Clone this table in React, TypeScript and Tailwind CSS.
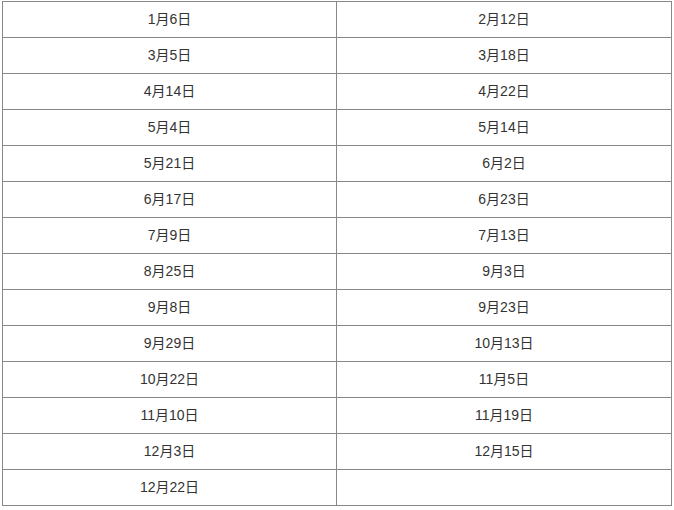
const rows: [string, string][] = [
  ["1月6日", "2月12日"],
  ["3月5日", "3月18日"],
  ["4月14日", "4月22日"],
  ["5月4日", "5月14日"],
  ["5月21日", "6月2日"],
  ["6月17日", "6月23日"],
  ["7月9日", "7月13日"],
  ["8月25日", "9月3日"],
  ["9月8日", "9月23日"],
  ["9月29日", "10月13日"],
  ["10月22日", "11月5日"],
  ["11月10日", "11月19日"],
  ["12月3日", "12月15日"],
  ["12月22日", ""],
];

export default function App() {
  return (
    <div className="bg-white w-[674px] h-[510px] pt-px pl-[2px] font-['Arial','Liberation_Sans','Noto_Sans_CJK_SC',sans-serif] text-[14px] text-[#333]">
      <table className="border-collapse w-[670px] table-fixed">
        <colgroup>
          <col className="w-[334px]" />
          <col />
        </colgroup>
        <tbody>
          {rows.map(([a, b], i) => (
            <tr key={i} className="h-[36px]">
              <td className="border border-[#888] text-center align-middle p-0">{a}</td>
              <td className="border border-[#888] text-center align-middle p-0">{b}</td>
            </tr>
          ))}
        </tbody>
      </table>
    </div>
  );
}
